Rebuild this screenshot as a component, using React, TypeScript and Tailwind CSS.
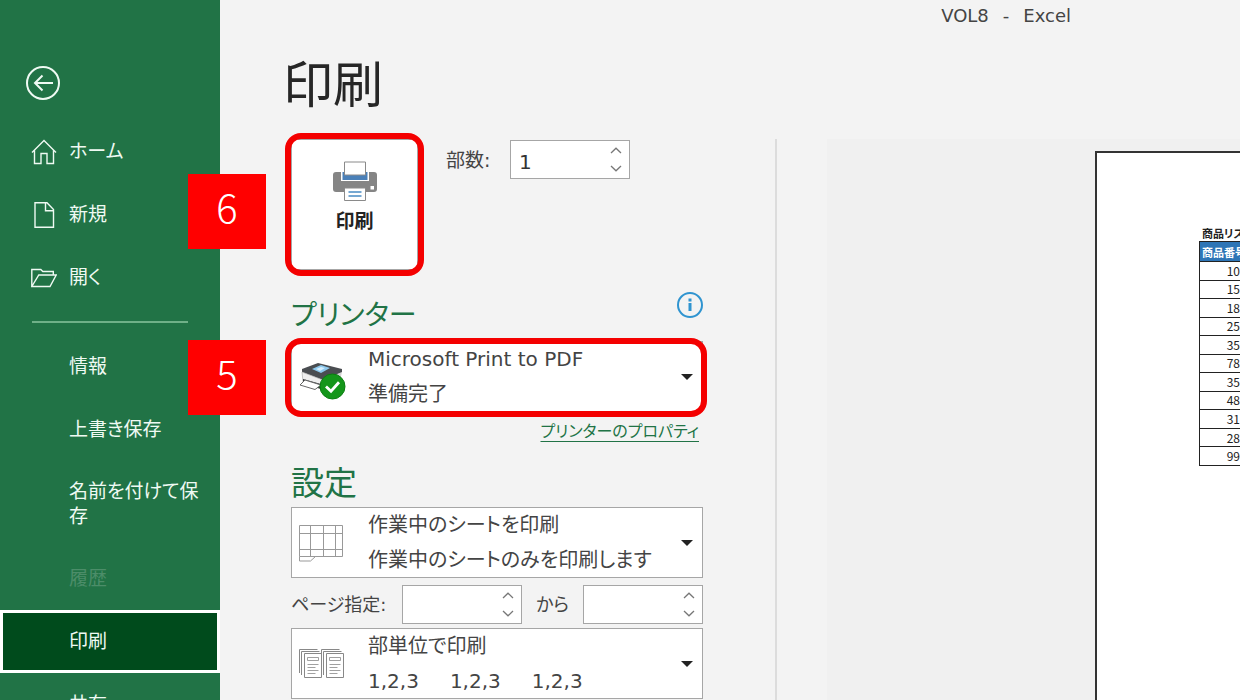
import type { ReactNode } from 'react'

const productNumbers = [10, 15, 18, 25, 35, 78, 35, 48, 31, 28, 99]

function HomeIcon() {
  return (
    <svg viewBox="0 0 26 26" className="h-[26px] w-[26px]" fill="none" stroke="currentColor" strokeWidth="1.4">
      <path d="M1 13.500 13 1.500l12 12M3.500 11.500v13H10V14.500h6v10h6.500v-13" />
    </svg>
  )
}

function NewIcon() {
  return (
    <svg viewBox="0 0 26 26" className="h-[26px] w-[26px]" fill="none" stroke="currentColor" strokeWidth="1.4">
      <path d="M4 .8h12l6.500 6.700v17.700H4zM14.500 .8v8h8" />
    </svg>
  )
}

function OpenIcon() {
  return (
    <svg viewBox="0 0 26 26" className="h-[26px] w-[26px]" fill="none" stroke="currentColor" strokeWidth="1.4">
      <path d="M.8 21.500v-17h9l2 2h10.500v3.500M.8 21.500 7.800 10h17.400l-6.200 11.500z" />
    </svg>
  )
}

interface NavItemProps {
  label: string
  icon?: ReactNode
  active?: boolean
  disabled?: boolean
}

function NavItem({ label, icon, active, disabled }: NavItemProps) {
  return (
    <button
      type="button"
      disabled={disabled}
      aria-current={active ? 'page' : undefined}
      className={`flex min-h-[63px] w-full shrink-0 items-center py-[18px] pr-4 text-left text-[19px] leading-[25px] ${
        active ? 'bg-[#004b1c] outline-3 -outline-offset-3 outline-white' : ''
      } ${disabled ? 'text-[#4c8d69]' : 'text-[#effaf3]'}`}
    >
      <span className="flex w-[69px] shrink-0 justify-end pr-3">{icon}</span>
      <span>{label}</span>
    </button>
  )
}

function Sidebar() {
  return (
    <nav className="flex w-[220px] shrink-0 flex-col bg-[#217346] pt-[66px] text-[#effaf3]">
      <button type="button" aria-label="戻る" className="mb-5 ml-[26px] h-[34px] w-[34px]">
        <svg viewBox="0 0 34 34" fill="none" stroke="currentColor" strokeWidth="2">
          <circle cx="17" cy="17" r="16" />
          <path d="M27 17H9.500M16.500 9.500 9 17l7.500 7.500" />
        </svg>
      </button>
      <NavItem label="ホーム" icon={<HomeIcon />} />
      <NavItem label="新規" icon={<NewIcon />} />
      <NavItem label="開く" icon={<OpenIcon />} />
      <hr className="mt-3 mr-8 mb-3 ml-8 h-0.5 shrink-0 border-0 bg-[#6fb088]" />
      <NavItem label="情報" />
      <NavItem label="上書き保存" />
      <NavItem label="名前を付けて保存" />
      <NavItem label="履歴" disabled />
      <NavItem label="印刷" active />
      <NavItem label="共有" />
    </nav>
  )
}

function StepBadge({ step }: { step: number }) {
  return (
    <span className="absolute -top-px -left-[103px] flex h-[75px] w-[78px] items-center justify-center bg-[#ff0000] pb-[11px] font-['Noto_Sans_CJK_JP',sans-serif] text-[40px] leading-none font-light text-white">
      {step}
    </span>
  )
}

function Spinner({ label, value }: { label: string; value?: string }) {
  return (
    <div className="flex h-[39px] w-[120px] shrink-0 border border-[#a6a6a6] bg-white">
      <input
        type="text"
        inputMode="numeric"
        aria-label={label}
        defaultValue={value}
        className="w-0 flex-1 pt-1 pl-2 text-[20px] text-[#333] outline-none"
      />
      <div className="flex w-[26px] flex-col text-[#777]">
        <button type="button" aria-label={`${label} 増やす`} className="flex flex-1 items-center justify-center">
          <svg viewBox="0 0 12 7" className="h-[7px] w-3" fill="none" stroke="currentColor" strokeWidth="1.3">
            <path d="m1 6 5-4.800L11 6" />
          </svg>
        </button>
        <button type="button" aria-label={`${label} 減らす`} className="flex flex-1 items-center justify-center">
          <svg viewBox="0 0 12 7" className="h-[7px] w-3" fill="none" stroke="currentColor" strokeWidth="1.3">
            <path d="m1 1 5 4.800L11 1" />
          </svg>
        </button>
      </div>
    </div>
  )
}

interface OptionSelectProps {
  label: string
  value: string
  detail: ReactNode
  icon: ReactNode
}

function OptionSelect({ label, value, detail, icon }: OptionSelectProps) {
  return (
    <div className="grid h-[71px] grid-cols-1 grid-rows-1 border border-[#a6a6a6] bg-white text-[20px] text-[#444]">
      <select
        aria-label={label}
        className="col-start-1 row-start-1 appearance-none bg-transparent pb-[35px] pl-[76px] leading-[34px] outline-none"
      >
        <option>{value}</option>
      </select>
      <div className="pointer-events-none col-start-1 row-start-1 flex items-center">
        <span className="flex w-[76px] pl-[7px]">{icon}</span>
        <span className="flex flex-1 gap-[31px] self-end leading-[34px]">{detail}</span>
        <svg viewBox="0 0 12 6" className="mr-[9px] h-1.5 w-3" fill="#222">
          <path d="M0 0h12L6 6z" />
        </svg>
      </div>
    </div>
  )
}

function PrintIcon() {
  return (
    <svg viewBox="0 0 46 40" className="h-10 w-[46px]">
      <rect x="1" y="11" width="44" height="20" rx="3" fill="#858585" />
      <path d="M9 11h28v9H9z" fill="#fff" />
      <path d="M10.500 11h25v8h-25z" fill="#4a80b8" />
      <path d="M12.500 1h21v13h-21zM12.500 27h21v12.500h-21z" fill="#fff" stroke="#8a8a8a" />
      <path d="M16.500 31h13M16.500 35h13" stroke="#4a8cc4" strokeWidth="1.400" />
      <path d="M38.500 25h3.500v3.500h-3.500z" fill="#fff" />
    </svg>
  )
}

function PrinterReadyIcon() {
  return (
    <svg viewBox="0 0 48 38" className="mt-2 h-[38px] w-12">
      <path d="m3 10 2 11 19 6 17-8 2-9-19 8z" fill="#d4d4d4" />
      <path d="m3 7 16-6 24 6v3l-19 8L3 10z" fill="#4a4d51" />
      <path d="m3 10 21 8v9L4 20z" fill="#efefef" stroke="#a5a5a5" strokeWidth=".6" />
      <path d="m13 7 9-4 9 3-9 5z" fill="#8ec9ee" />
      <path d="m17 7 5-2 4 1-5 3z" fill="#d5efff" />
      <path d="m4 17 18 5v5L4 22z" fill="#35373a" />
      <path d="m6 18-5 5 15 4.500 6-4.500z" fill="#fff" stroke="#666" />
      <circle cx="33.500" cy="24.500" r="12.500" fill="#14961a" stroke="#0a7d10" />
      <path d="m27 24.500 5 4.800 8-9" fill="none" stroke="#fff" strokeWidth="2.800" />
    </svg>
  )
}

function SheetIcon() {
  return (
    <svg viewBox="0 0 44 38" className="h-[38px] w-11" fill="none" stroke="#999">
      <path d="M.5 1.500h43v31H.5zM11.500 1.500v31M24.500 1.500v31M36.500 1.500v31M.5 9.500h43M.5 25.500h43" />
      <path d="M.5 32.500v4.500h11l5-4.500" />
    </svg>
  )
}

function CollateIcon() {
  return (
    <svg viewBox="0 0 46 30" className="h-[30px] w-[46px]" fill="#fff" stroke="#888">
      {[0, 22].map((x) => (
        <g key={x} transform={`translate(${x} 0)`}>
          <path d="M.5 24V.5h18M2.500 26V2.500h18" fill="none" />
          <path d="M5.500 4.500h17v24h-17z" />
          <path d="M8.500 8.500h11v3h-11zM8.500 15.500h11M8.500 18.500h8M8.500 21.500h11M8.500 24.500h8" strokeWidth=".8" />
        </g>
      ))}
    </svg>
  )
}

function PrintSettings() {
  return (
    <section className="w-[412px] shrink-0">
      <div className="relative flex items-start pt-px">
        <div className="absolute top-9">
          <StepBadge step={6} />
        </div>
        <button
          type="button"
          className="relative -mt-px flex h-[131px] w-[127px] flex-col items-center border border-[#a6a6a6] bg-white pt-[21px] text-[19px] leading-[25px] font-bold text-[#222]"
        >
          <PrintIcon />
          <span className="mt-2">印刷</span>
          <span className="absolute -inset-[7px] rounded-2xl border-6 border-[#f40000]" />
        </button>
        <span className="ml-7 w-16 pt-1.5 text-[19px] leading-7">部数:</span>
        <Spinner label="部数" value="1" />
      </div>

      <div className="mt-[22px] mb-[5px] flex items-start justify-between">
        <h2 className="pt-1 text-[28px] leading-10 text-[#217346]">プリンター</h2>
        <button type="button" aria-label="プリンターの状態" className="h-[26px] w-[26px]">
          <svg viewBox="0 0 26 26" fill="none" stroke="#2f94d0" strokeWidth="2">
            <circle cx="13" cy="13" r="12" />
            <path d="M13 11v8M13 6.500v3" strokeWidth="3" />
          </svg>
        </button>
      </div>
      <div className="relative">
        <StepBadge step={5} />
        <OptionSelect
          label="プリンター"
          value="Microsoft Print to PDF"
          detail="準備完了"
          icon={<PrinterReadyIcon />}
        />
        <span className="pointer-events-none absolute -top-[3px] -right-1 -bottom-[5px] -left-1.5 rounded-2xl border-6 border-[#f40000]" />
      </div>
      <div className="mt-1.5 mr-1 text-right text-base leading-7 text-[#217346]">
        <a href="#properties" className="underline underline-offset-4">
          プリンターのプロパティ
        </a>
      </div>

      <h2 className="mt-[18px] mb-[3px] text-[33px] leading-10 text-[#217346]">設定</h2>
      <OptionSelect
        label="印刷対象"
        value="作業中のシートを印刷"
        detail="作業中のシートのみを印刷します"
        icon={<SheetIcon />}
      />
      <div className="mt-[7px] mb-1 flex items-center text-lg leading-7">
        <span className="w-[111px]">ページ指定:</span>
        <Spinner label="開始ページ" />
        <span className="flex-1 text-center">から</span>
        <Spinner label="終了ページ" />
      </div>
      <OptionSelect
        label="印刷単位"
        value="部単位で印刷"
        detail={
          <>
            <span>1,2,3</span>
            <span>1,2,3</span>
            <span>1,2,3</span>
          </>
        }
        icon={<CollateIcon />}
      />
    </section>
  )
}

function Preview() {
  return (
    <section aria-label="印刷プレビュー" className="flex min-w-0 flex-1 overflow-hidden bg-[#f0f0f0] pt-3 pl-[268px]">
      <div className="w-[640px] shrink-0 border-2 border-b-0 border-[#333] bg-white pt-[72px] pl-[102px] font-['Noto_Sans_CJK_JP',sans-serif] text-[#222]">
        <table className="h-[225px] border-collapse text-[11px] leading-4">
          <caption className="h-4 pl-[3px] text-left font-bold whitespace-nowrap">商品リスト</caption>
          <thead>
            <tr>
              <th className="h-5 w-[52px] border border-[#222] bg-[#2e75b6] px-0.5 py-0 text-left font-bold whitespace-nowrap text-white">
                商品番号
              </th>
            </tr>
          </thead>
          <tbody>
            {productNumbers.map((number, index) => (
              <tr key={index}>
                <td className="border border-[#222] py-0 pr-3 text-right text-xs leading-4">{number}</td>
              </tr>
            ))}
          </tbody>
        </table>
      </div>
    </section>
  )
}

export default function App() {
  return (
    <div className="flex h-screen overflow-hidden bg-[#f3f3f3] font-['DejaVu_Sans','Noto_Sans_CJK_JP',sans-serif] text-[#444] [font-feature-settings:'palt']">
      <Sidebar />
      <main className="flex min-w-0 flex-1 flex-col">
        <header className="flex h-8 shrink-0 items-center justify-end gap-3.5 pr-[169px] text-lg">
          <span>VOL8</span>
          <span>-</span>
          <span>Excel</span>
        </header>
        <h1 className="mt-[30px] mb-[29px] ml-[63px] text-[50px] leading-12 text-[#262626]">印刷</h1>
        <div className="flex min-h-0 flex-1 pl-[71px]">
          <PrintSettings />
          <div className="ml-[72px] w-0.5 shrink-0 bg-[#dcdcdc]" />
          <div className="w-[50px] shrink-0" />
          <Preview />
        </div>
      </main>
    </div>
  )
}
